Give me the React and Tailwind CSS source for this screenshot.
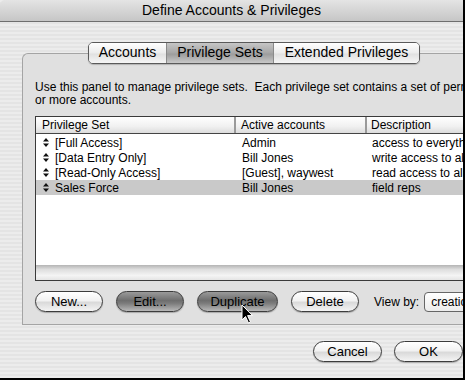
import React from 'react';

const rows = [
  { name: '[Full Access]', accounts: 'Admin', desc: 'access to everything' },
  { name: '[Data Entry Only]', accounts: 'Bill Jones', desc: 'write access to all' },
  { name: '[Read-Only Access]', accounts: '[Guest], waywest', desc: 'read access to all' },
  { name: 'Sales Force', accounts: 'Bill Jones', desc: 'field reps', selected: true },
];

const SortIcon = () => (
  <svg width="6" height="9" viewBox="0 0 6 9" className="shrink-0">
    <path d="M3 0 L6 3.5 H0 Z M3 9 L6 5.5 H0 Z" fill="#111" />
  </svg>
);

const AquaButton = ({ label, dark, width }) => (
  <button
    className={`h-[21px] shrink-0 rounded-full border border-[#3c3c3c] text-[13px] text-black flex items-center justify-center shadow-[0_1px_1px_rgba(0,0,0,0.25)] ${width} ${
      dark
        ? 'bg-[linear-gradient(to_bottom,#9a9a9a_0%,#6e6e6e_45%,#7c7c7c_60%,#b8b8b8_100%)]'
        : 'bg-[linear-gradient(to_bottom,#ffffff_0%,#f2f2f2_45%,#dadada_55%,#f4f4f4_100%)]'
    }`}
  >
    {label}
  </button>
);

const Cursor = () => (
  <svg width="14" height="20" viewBox="0 0 14 20" className="absolute left-[241px] top-[304px]">
    <path d="M1 1 L1 16 L4.5 12.5 L7.5 19 L9.5 18 L6.6 11.6 L11.5 11.6 Z" fill="#000" stroke="#fff" strokeWidth="1" />
  </svg>
);

export default function App() {
  return (
    <div
      className="relative w-[465px] h-[380px] overflow-hidden border-r-2 border-b-2 border-black bg-[repeating-linear-gradient(to_bottom,#ececec_0px,#ececec_2px,#e4e4e4_2px,#e4e4e4_4px)] text-black"
      style={{ fontFamily: '"Liberation Sans", Arial, sans-serif' }}
    >
      {/* Title bar */}
      <div className="h-[22px] rounded-tl-[5px] border-b border-[#6e6e6e] bg-[linear-gradient(to_bottom,#e4e4e4,#c6c6c6)] flex items-center justify-center text-[14px]">
        Define Accounts &amp; Privileges
      </div>

      {/* Tabs */}
      <div className="pl-[88px] pt-[18px] relative z-10">
        <div className="inline-flex h-[22px] rounded-[5px] border border-[#5a5a5a] overflow-hidden text-[14px] shadow-[0_1px_1px_rgba(0,0,0,0.2)]">
          <div className="w-[78px] flex items-center justify-center bg-[linear-gradient(to_bottom,#ffffff,#ececec_50%,#e0e0e0_55%,#f6f6f6)] border-r border-[#8a8a8a]">
            Accounts
          </div>
          <div className="w-[107px] flex items-center justify-center bg-[linear-gradient(to_bottom,#c6c6c6,#a6a6a6_50%,#9c9c9c_55%,#c8c8c8)] border-r border-[#8a8a8a]">
            Privilege Sets
          </div>
          <div className="w-[145px] flex items-center justify-center bg-[linear-gradient(to_bottom,#ffffff,#ececec_50%,#e0e0e0_55%,#f6f6f6)]">
            Extended Privileges
          </div>
        </div>
      </div>

      {/* Group box */}
      <div className="ml-[22px] -mt-[11px] w-[470px] h-[272px] rounded-tl-[6px] border-t border-l border-b border-[#a4a4a4] bg-[#e0e0e0] pl-[12px] pt-[27px]">
        <p className="text-[12px] leading-[13px] whitespace-nowrap">
          Use this panel to manage privilege sets.&nbsp; Each privilege set contains a set of permissions
          <br />
          or more accounts.
        </p>

        {/* Table */}
        <div className="mt-[9px] w-[460px] h-[165px] border border-[#3a3a3a] bg-white flex flex-col text-[12px]">
          <div className="h-[17px] flex border-b border-[#444] bg-[linear-gradient(to_bottom,#ffffff,#f0f0f0_60%,#dcdcdc)] shrink-0">
            <div className="w-[200px] pl-[6px] flex items-center border-r-2 border-[#9a9a9a]">Privilege Set</div>
            <div className="w-[131px] pl-[5px] flex items-center border-r-2 border-[#9a9a9a]">Active accounts</div>
            <div className="flex-1 pl-[4px] flex items-center">Description</div>
          </div>
          <div className="flex-1 pt-[1px]">
            {rows.map((r) => (
              <div key={r.name} className={`h-[15px] flex items-center ${r.selected ? 'bg-[#c9c9c9]' : ''}`}>
                <div className="w-[202px] pl-[7px] flex items-center gap-[6px]">
                  <SortIcon />
                  <span>{r.name}</span>
                </div>
                <div className="w-[133px] pl-[4px] whitespace-nowrap">{r.accounts}</div>
                <div className="flex-1 pl-[1px] whitespace-nowrap">{r.desc}</div>
              </div>
            ))}
          </div>
          <div className="h-[15px] shrink-0 bg-[linear-gradient(to_bottom,#b4b4b4,#dedede_30%,#f4f4f4_70%,#e4e4e4)]" />
        </div>

        {/* Button row */}
        <div className="mt-[10px] flex items-center">
          <AquaButton label="New..." width="w-[68px]" />
          <div className="w-[13px] shrink-0" />
          <AquaButton label="Edit..." dark width="w-[68px]" />
          <div className="w-[13px] shrink-0" />
          <AquaButton label="Duplicate" dark width="w-[81px]" />
          <div className="w-[13px] shrink-0" />
          <AquaButton label="Delete" width="w-[68px]" />
          <span className="ml-[15px] text-[12px] whitespace-nowrap">View by:</span>
          <div className="ml-[5px] h-[20px] w-[80px] shrink-0 overflow-hidden whitespace-nowrap rounded-[4px] border border-[#666] bg-[linear-gradient(to_bottom,#ffffff,#ececec)] text-[12px] flex items-center pl-[6px]">
            creation order
          </div>
        </div>
      </div>

      {/* OK / Cancel */}
      <div className="mt-[16px] flex pl-[313px] gap-[12px]">
        <AquaButton label="Cancel" width="w-[69px]" />
        <AquaButton label="OK" width="w-[69px]" />
      </div>

      <Cursor />
    </div>
  );
}
